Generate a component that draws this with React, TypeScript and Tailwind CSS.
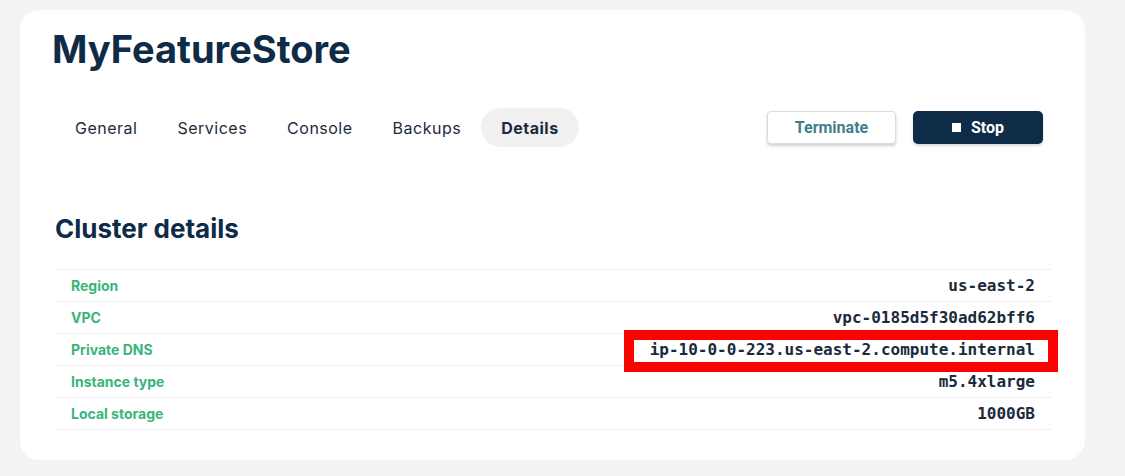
import { useState } from "react";

const tabs = ["General", "Services", "Console", "Backups", "Details"];

const rows = [
  { label: "Region", value: "us-east-2" },
  { label: "VPC", value: "vpc-0185d5f30ad62bff6" },
  { label: "Private DNS", value: "ip-10-0-0-223.us-east-2.compute.internal", marked: true },
  { label: "Instance type", value: "m5.4xlarge" },
  { label: "Local storage", value: "1000GB" },
];

export default function App() {
  const [active, setActive] = useState("Details");

  return (
    <div className="min-h-[476px] w-[1125px] bg-[#f3f3f3] pt-[10px] pl-[20px]">
      <div className="w-[1065px] h-[450px] rounded-[20px] bg-white pt-[13px]">
        <h1 className="pl-[32px] text-[38px] leading-[52px] font-bold tracking-[0px] text-[#0e2b47] font-['Inter',sans-serif]">
          MyFeatureStore
        </h1>

        {/* Tabs + actions */}
        <div className="mt-[33px] flex items-center justify-between pl-[35px] pr-[42px]">
          <div className="flex items-center">
            {tabs.map(t => (
              <button
                key={t}
                onClick={() => setActive(t)}
                className={
                  "h-[39px] rounded-full px-5 text-[16px] tracking-[0.5px] font-['Inter',sans-serif] text-[#1d2b3c] " +
                  (active === t ? "bg-[#f1f1f1] font-bold" : "font-normal")
                }
              >
                {t}
              </button>
            ))}
          </div>
          <div className="flex items-center gap-[17px] font-['Roboto',sans-serif]">
            <button className="w-[129px] h-[33px] rounded-[4px] border border-[#d7dede] bg-white text-[16px] font-bold text-[#3f7f8c] shadow-[0_2px_3px_rgba(0,0,0,0.18)]">
              Terminate
            </button>
            <button className="w-[130px] h-[33px] rounded-[5px] bg-[#0e2b47] text-white text-[16px] font-bold flex items-center justify-center gap-[10px] shadow-[0_2px_3px_rgba(0,0,0,0.15)]">
              <span className="w-[9px] h-[9px] bg-white" />
              Stop
            </button>
          </div>
        </div>

        <h2 className="mt-[66px] pl-[35px] text-[26px] leading-[32px] font-bold tracking-[0px] text-[#0e2b47] font-['Inter',sans-serif]">
          Cluster details
        </h2>

        <div className="mt-[24px] ml-[35px] w-[997px] border-t border-[#efefef]">
          {rows.map(r => (
            <div
              key={r.label}
              className="relative flex h-[32px] items-center justify-between border-b border-[#efefef] pl-4 pr-[17px]"
            >
              <span className="text-[14px] font-bold text-[#3ab47b] font-['Inter',sans-serif] tracking-[0px]">
                {r.label}
              </span>
              <span className="text-[16px] font-bold text-[#1a2a3c] font-['DejaVu_Sans_Mono',monospace]">
                {r.value}
              </span>
              {r.marked && (
                <div className="pointer-events-none absolute right-[-6px] top-[-4px] h-[42px] w-[434px] border-[10px] border-[#ff0000]" />
              )}
            </div>
          ))}
        </div>
      </div>
    </div>
  );
}
